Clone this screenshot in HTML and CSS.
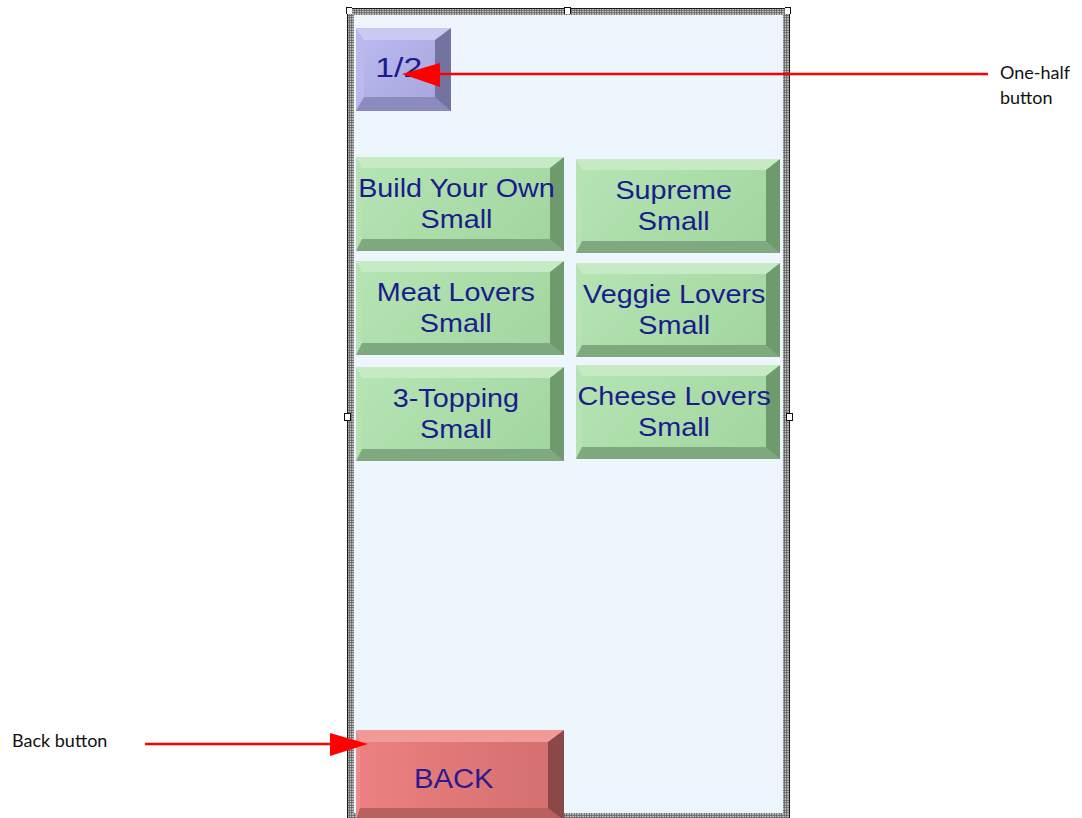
FILE: index.html
```html
<!DOCTYPE html>
<html>
<head>
    <title>Pizza Menu - Small</title>
    <link rel="stylesheet" href="styles.css">
</head>
<body>

<div class="frame">
    <div class="canvas">
        <div class="btn btn-half"><span class="lbl">1/2</span></div>

        <div class="menu-grid">
            <div class="btn btn-green"><span class="lbl">Build Your Own<br>Small</span></div>
            <div class="btn btn-green down"><span class="lbl">Supreme<br>Small</span></div>
            <div class="btn btn-green"><span class="lbl">Meat Lovers<br>Small</span></div>
            <div class="btn btn-green down"><span class="lbl">Veggie Lovers<br>Small</span></div>
            <div class="btn btn-green down"><span class="lbl">3-Topping<br>Small</span></div>
            <div class="btn btn-green"><span class="lbl">Cheese Lovers<br>Small</span></div>
        </div>

        <div class="btn btn-back"><span class="lbl">BACK</span></div>
    </div>
    <span class="handle h-tl"></span>
    <span class="handle h-tc"></span>
    <span class="handle h-tr"></span>
    <span class="handle h-ml"></span>
    <span class="handle h-mr"></span>
</div>

<!-- callouts -->
<div class="note note-half">One-half<br>button</div>
<div class="note note-back">Back button</div>

<svg class="arrows" width="1082" height="818" viewBox="0 0 1082 818">
    <line x1="988" y1="74" x2="438" y2="74" stroke="#ff0000" stroke-width="2.5"/>
    <polygon points="402,74 440,63 440,87" fill="#ff0000"/>
    <line x1="145" y1="744" x2="332" y2="744" stroke="#ff0000" stroke-width="2.5"/>
    <polygon points="368,744 330,733 330,756" fill="#ff0000"/>
</svg>

</body>
</html>
```

FILE: styles.css
```css
body {
    margin: 0;
    background-color: #ffffff;
    height: 818px;
    overflow: hidden;
    position: relative;
    font-family: "Liberation Sans", Arial, sans-serif;
}
.frame {
    position: relative;
    box-sizing: border-box;
    margin: 8px 0 0 347px;
    width: 443px;
    height: 812px;
    border: 1px solid #1a1a1a;
    padding: 6px;
    background-color: #f4f4f4;
    background-image: radial-gradient(circle, #5a5a5a 0.9px, transparent 1.3px);
    background-size: 2.5px 2.5px;
}
.canvas {
    box-sizing: border-box;
    height: 100%;
    background-color: #eef6fd;
    padding: 13px 0 0 2px;
    display: flex;
    flex-direction: column;
    align-items: flex-start;
}
.canvas > * {
    flex-shrink: 0;
}
.btn {
    box-sizing: border-box;
    display: flex;
    align-items: center;
    justify-content: center;
    text-align: center;
    white-space: nowrap;
    color: #1b1b8e;
    font-size: 25px;
    line-height: 31px;
    border-style: solid;
    border-width: 11px 14px 12px 6px;
}
.lbl {
    display: inline-block;
    transform: scaleX(1.15);
}
.btn-half {
    width: 95px;
    height: 83px;
    font-size: 27px;
    border-width: 12px 16px 14px 8px;
    border-color: #c9c9f3 #73739f #8b8bbd #b9b9ee;
    background: linear-gradient(135deg, #b9b9ee, #a8a8e0);
}
.btn-half .lbl {
    transform: scaleX(1.25);
    margin-right: 2px;
}
.menu-grid {
    margin-top: 46px;
    display: grid;
    grid-template-columns: 208px 204px;
    grid-auto-rows: 94px;
    column-gap: 12px;
    row-gap: 10px;
}
.btn-green {
    border-color: #c6ebc4 #6f9a6e #7fa97e #b6e2b4;
    background: linear-gradient(135deg, #b4e4b2, #a2d6a0);
}
.down {
    margin-top: 2px;
    margin-bottom: -2px;
}
.btn-back {
    margin-top: 271px;
    width: 208px;
    height: 90px;
    font-size: 27px;
    color: #2a1a90;
    padding-top: 8px;
    border-width: 12px 16px 12px 4px;
    border-color: #f29a9a #8a4848 #b86060 #ee8a8a;
    background: linear-gradient(90deg, #ec8080, #d47070);
}
.btn-back .lbl {
    transform: scaleX(1.08);
}
.handle {
    position: absolute;
    width: 5px;
    height: 6px;
    background: #ffffff;
    border: 1.5px solid #111;
}
.h-tl { left: -2px; top: -2px; border-right: none; border-bottom: none; }
.h-tc { left: 216px; top: -2px; border-bottom: none; }
.h-tr { right: -2px; top: -2px; border-left: none; border-bottom: none; }
.h-ml { left: -4px; top: 404px; }
.h-mr { right: -4px; top: 404px; }
.note {
    position: absolute;
    font-family: Lato, "Open Sans", sans-serif;
    font-size: 18px;
    line-height: 25px;
    color: #111111;
}
.note-half {
    left: 1000px;
    top: 60px;
}
.note-back {
    left: 12px;
    top: 728px;
}
.arrows {
    position: absolute;
    left: 0;
    top: 0;
    pointer-events: none;
}
```
